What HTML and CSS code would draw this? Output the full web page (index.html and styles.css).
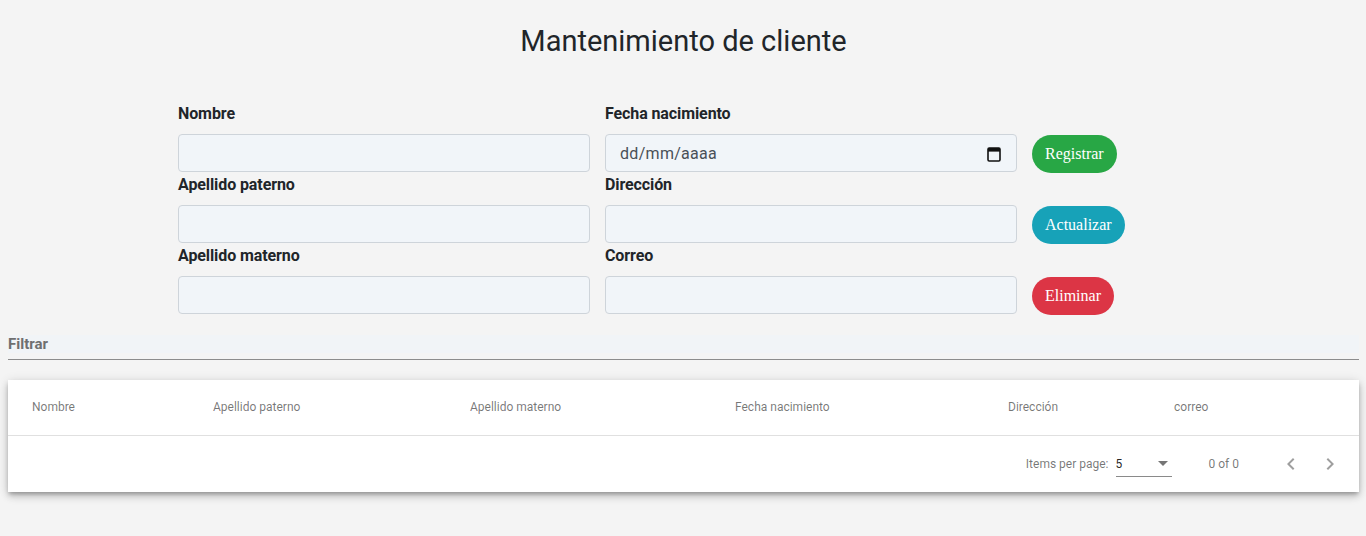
FILE: index.html
```html
<!DOCTYPE html>
<html lang="es">
<head>
<meta charset="utf-8">
<title>Mantenimiento de cliente</title>
<link rel="stylesheet" href="styles.css">
</head>
<body>
<main class="page">
  <h2 class="title">Mantenimiento de cliente</h2>

  <form class="form">
    <div class="grid">
      <div class="field">
        <label class="lbl">Nombre</label>
        <input class="inp" type="text">
      </div>
      <div class="field">
        <label class="lbl">Fecha nacimiento</label>
        <div class="inp date">
          <span class="date-text">dd/mm/aaaa</span>
          <svg class="cal" width="14" height="16" viewBox="0 0 14 16" aria-hidden="true">
            <rect x="1" y="2" width="12" height="13" rx="1.2" fill="none" stroke="#111" stroke-width="1.6"/>
            <rect x="1" y="2" width="12" height="3.6" fill="#111"/>
          </svg>
        </div>
      </div>
      <div class="btn-cell"><button type="button" class="btn green">Registrar</button></div>

      <div class="field">
        <label class="lbl">Apellido paterno</label>
        <input class="inp" type="text">
      </div>
      <div class="field">
        <label class="lbl">Dirección</label>
        <input class="inp" type="text">
      </div>
      <div class="btn-cell"><button type="button" class="btn teal">Actualizar</button></div>

      <div class="field">
        <label class="lbl">Apellido materno</label>
        <input class="inp" type="text">
      </div>
      <div class="field">
        <label class="lbl">Correo</label>
        <input class="inp" type="text">
      </div>
      <div class="btn-cell"><button type="button" class="btn red">Eliminar</button></div>
    </div>
  </form>

  <div class="filter">
    <div class="filter-band">
      <span class="filter-label">Filtrar</span>
    </div>
  </div>

  <section class="card">
    <div class="thead">
      <div class="th">Nombre</div>
      <div class="th">Apellido paterno</div>
      <div class="th">Apellido materno</div>
      <div class="th">Fecha nacimiento</div>
      <div class="th">Dirección</div>
      <div class="th">correo</div>
    </div>
    <div class="paginator">
      <span class="ipp">Items per page:</span>
      <div class="sel">
        <span class="sel-val">5</span>
        <svg width="10" height="5" viewBox="0 0 10 5" aria-hidden="true"><path d="M0 0 L10 0 L5 5 Z" fill="#757575"/></svg>
      </div>
      <span class="range">0 of 0</span>
      <div class="nav">
        <svg width="24" height="24" viewBox="0 0 24 24" aria-hidden="true"><path d="M15.41 7.41 14 6l-6 6 6 6 1.41-1.41L10.83 12z" fill="rgba(0,0,0,0.38)"/></svg>
        <svg width="24" height="24" viewBox="0 0 24 24" aria-hidden="true"><path d="M10 6 8.59 7.41 13.17 12l-4.58 4.59L10 18l6-6z" fill="rgba(0,0,0,0.38)"/></svg>
      </div>
    </div>
  </section>
</main>
</body>
</html>
```
FILE: styles.css
```css
* { box-sizing: border-box; }
html, body { margin: 0; padding: 0; }
body {
  background: #f4f4f4;
  font-family: Roboto, "Liberation Sans", Arial, sans-serif;
  color: #212529;
  width: 1366px;
  height: 536px;
  overflow: hidden;
}
.page { padding: 0 7px 0 8px; }
.title {
  margin: 0;
  padding-top: 22px;
  height: 101px;
  text-align: center;
  font-size: 29px;
  font-weight: 400;
  line-height: 38px;
  color: #212529;
}
.form { padding-left: 170px; }
.grid {
  display: grid;
  grid-template-columns: 412px 412px auto;
  column-gap: 15px;
}
.field { display: flex; flex-direction: column; }
.lbl {
  font-size: 16px;
  font-weight: 700;
  line-height: 24px;
  height: 25px;
  padding-top: 1px;
  margin-bottom: 8px;
  color: #212529;
  letter-spacing: -0.1px;
}
.inp {
  height: 38px;
  width: 412px;
  background: #f1f5f9;
  border: 1px solid #ced4da;
  border-radius: 4px;
  font-family: inherit;
  font-size: 16px;
  padding: 0 12px;
  outline: none;
}
.date {
  display: flex;
  align-items: center;
  justify-content: space-between;
  padding: 0 15px 0 14px;
}
.date-text { color: #495057; font-size: 16px; letter-spacing: 0.3px; }
.cal { margin-top: 1px; }
.btn-cell {
  display: flex;
  align-items: flex-end;
}
.btn {
  height: 38px;
  margin-bottom: -1px;
  border: none;
  border-radius: 19px;
  padding: 0 13px;
  color: #fff;
  font-family: "Liberation Serif", "Times New Roman", serif;
  font-size: 16px;
  cursor: pointer;
}
.green { background: #28a745; }
.teal { background: #17a2b8; }
.red { background: #dc3545; }

.filter {
  margin-top: 21px;
  width: 1351px;
  padding-bottom: 6px;
  border-bottom: 1px solid #8c8c8c;
}
.filter-band {
  height: 18px;
  background: #f1f4f7;
  display: flex;
  align-items: center;
}
.filter-label {
  font-size: 15px;
  font-weight: 700;
  line-height: 18px;
  color: #6f6f6f;
}

.card {
  margin-top: 20px;
  width: 1351px;
  background: #fff;
  box-shadow: 0 3px 4px -1px rgba(0,0,0,0.25), 0 5px 8px 0 rgba(0,0,0,0.14), 0 1px 10px 0 rgba(0,0,0,0.12);
}
.thead {
  display: grid;
  grid-template-columns: 181px 257px 265px 273px 166px 1fr;
  padding-left: 24px;
  padding-bottom: 2px;
  height: 56px;
  align-items: center;
  border-bottom: 1px solid #e0e0e0;
}
.th {
  font-size: 12px;
  color: rgba(0,0,0,0.54);
}
.paginator {
  height: 56px;
  display: flex;
  align-items: center;
  justify-content: flex-end;
  font-size: 12px;
  color: rgba(0,0,0,0.54);
  padding-right: 17px;
}
.ipp { margin-right: 7px; }
.sel {
  width: 56px;
  height: 26px;
  display: flex;
  align-items: center;
  justify-content: space-between;
  border-bottom: 1px solid #8a8a8a;
  padding: 0 4px 0 0;
  margin-right: 37px;
}
.sel-val { color: rgba(0,0,0,0.87); font-size: 12px; }
.range { margin-right: 40px; }
.nav { display: flex; gap: 15px; }
```
